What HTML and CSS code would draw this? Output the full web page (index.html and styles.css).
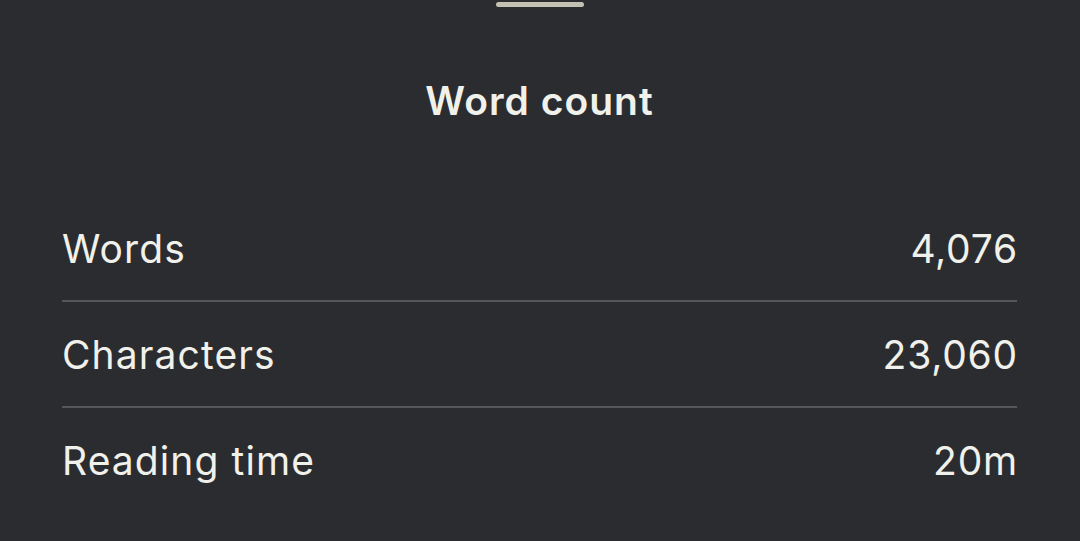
FILE: index.html
```html
<!DOCTYPE html>
<html>
<head>
<meta charset="utf-8">
<link rel="stylesheet" href="styles.css">
</head>
<body>
<div class="sheet">
  <div class="handle"></div>
  <h1 class="title">Word count</h1>
  <div class="rows">
    <div class="row"><span class="label">Words</span><span class="value">4,076</span></div>
    <div class="row"><span class="label">Characters</span><span class="value">23,060</span></div>
    <div class="row last"><span class="label">Reading time</span><span class="value">20m</span></div>
  </div>
</div>
</body>
</html>
```
FILE: styles.css
```css
html, body {
  margin: 0;
  padding: 0;
  background: #2b2c30;
  height: 100%;
  overflow: hidden;
}
.sheet {
  font-family: Inter, "Noto Sans", sans-serif;
  color: #f1f1ec;
  display: flex;
  flex-direction: column;
  padding: 0 63px 0 62px;
}
.handle {
  align-self: center;
  width: 88px;
  height: 5px;
  margin-top: 2px;
  border-radius: 3px;
  background: #c2c1b4;
}
.title {
  margin: 70px 0 0;
  text-align: center;
  font-size: 39px;
  line-height: 48px;
  font-weight: 600;
  letter-spacing: 1px;
}
.rows {
  margin-top: 71px;
  display: flex;
  flex-direction: column;
}
.row {
  height: 104px;
  display: flex;
  align-items: center;
  justify-content: space-between;
  border-bottom: 2px solid #55565a;
  font-size: 39px;
  font-weight: 400;
}
.label {
  letter-spacing: 1.1px;
}
.value {
  letter-spacing: 0.8px;
  margin-right: -1px;
}
.row.last {
  border-bottom: none;
}
```
